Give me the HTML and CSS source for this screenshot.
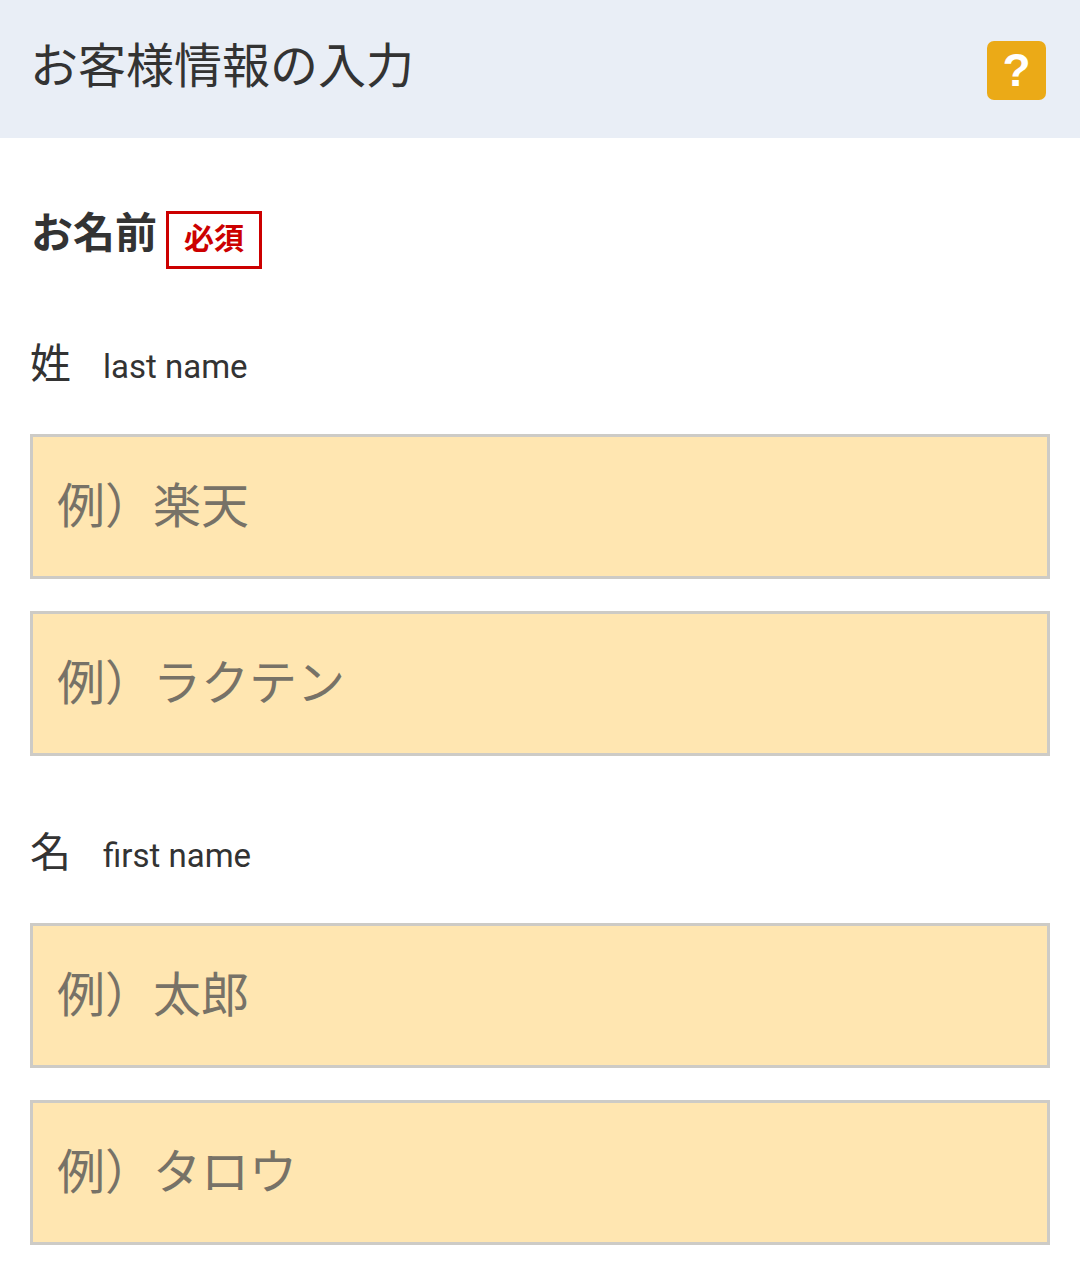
FILE: index.html
```html
<!DOCTYPE html>
<html lang="ja">
<head>
    <meta charset="UTF-8">
    <meta name="viewport" content="width=device-width, initial-scale=1.0">
    <title>お客様情報の入力</title>
    <link rel="stylesheet" href="styles.css">
</head>
<body>
    <div class="header">
        <h1>お客様情報の入力</h1>
        <div class="help">?</div>
    </div>

    <div class="content">
        <div class="section-title">
            <h2>お名前</h2>
            <span class="required">必須</span>
        </div>

        <div class="field-label"><span class="label-ja">姓</span><span class="label-en">last name</span></div>
        <div class="input-group">
            <input class="text-input" type="text" placeholder="例）楽天">
            <input class="text-input" type="text" placeholder="例）ラクテン">
        </div>

        <div class="field-label second"><span class="label-ja">名</span><span class="label-en">first name</span></div>
        <div class="input-group">
            <input class="text-input" type="text" placeholder="例）太郎">
            <input class="text-input" type="text" placeholder="例）タロウ">
        </div>
    </div>
</body>
</html>
```

FILE: styles.css
```css
* {
    box-sizing: border-box;
}
body {
    margin: 0;
    background-color: #fff;
    color: #333;
    font-family: Roboto, "Noto Sans CJK JP", sans-serif;
}
.header {
    display: flex;
    justify-content: space-between;
    align-items: center;
    height: 138px;
    padding: 0 34px 0 30px;
    background-color: #e9eef6;
}
.header h1 {
    margin: 0 0 4px 0;
    font-size: 48px;
    font-weight: 400;
    line-height: 60px;
}
.help {
    width: 59px;
    height: 59px;
    margin-top: 2px;
    border-radius: 7px;
    background-color: #ebaa17;
    color: #fff;
    font-family: "Liberation Sans", sans-serif;
    font-size: 46px;
    font-weight: 700;
    line-height: 59px;
    text-align: center;
}
.content {
    padding: 0 30px;
}
.section-title {
    display: flex;
    align-items: flex-start;
    gap: 9px;
    padding-top: 73px;
}
.section-title h2 {
    margin: 1px 0 0 1px;
    font-size: 42px;
    font-weight: 700;
    line-height: 44px;
}
.required {
    width: 96px;
    height: 58px;
    border: 3px solid #cc0000;
    color: #cc0000;
    font-size: 30px;
    font-weight: 700;
    line-height: 50px;
    text-align: center;
}
.field-label {
    display: flex;
    align-items: baseline;
    margin-top: 70px;
    line-height: 50px;
}
.field-label.second {
    margin-top: 72px;
}
.label-ja {
    width: 73px;
    font-size: 41px;
}
.label-en {
    font-size: 33px;
}
.input-group {
    display: flex;
    flex-direction: column;
    gap: 32px;
    margin-top: 42px;
}
.text-input {
    display: block;
    width: 100%;
    height: 145px;
    padding: 0 0 1px 24px;
    border: 3px solid #cdcbc6;
    border-radius: 0;
    outline: none;
    background-color: #ffe6b1;
    color: #333;
    font-family: Roboto, "Noto Sans CJK JP", sans-serif;
    font-size: 48px;
}
.text-input::placeholder {
    color: #777267;
    opacity: 1;
}
```
